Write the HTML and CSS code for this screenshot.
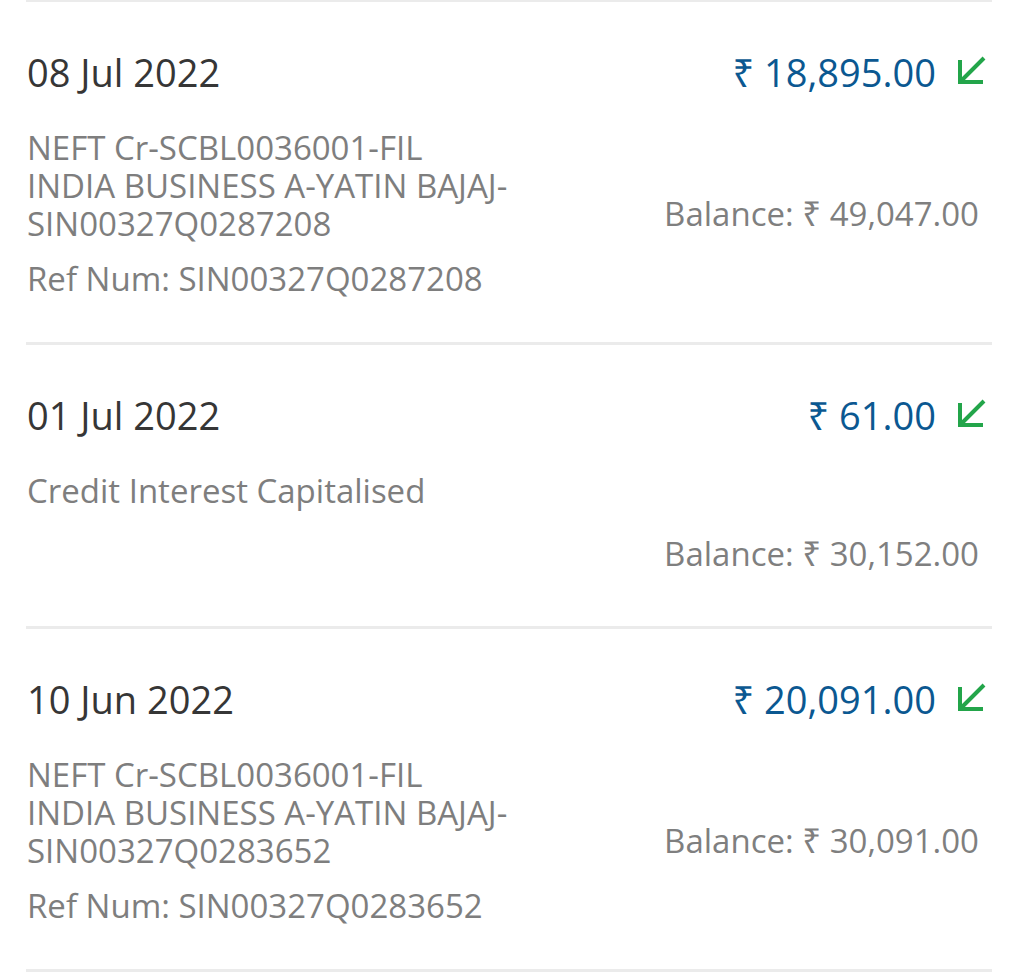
FILE: index.html
```html
<!DOCTYPE html>
<html lang="en">
<head>
<meta charset="utf-8">
<title>Transactions</title>
<link rel="stylesheet" href="styles.css">
</head>
<body>
<div class="list">
  <div class="txn">
    <div class="txn-top">
      <div class="date">08 Jul 2022</div>
      <div class="amount-wrap">
        <span class="amount">₹ 18,895.00</span>
        <svg class="arrow" viewBox="0 0 30 30" width="30" height="30"><path d="M3 4 V26 H26 M4 25 L27 2" fill="none" stroke="#23a54a" stroke-width="4" stroke-linejoin="miter"/></svg>
      </div>
    </div>
    <div class="txn-bottom">
      <div class="details">
        <div class="desc">NEFT Cr-SCBL0036001-FIL<br>INDIA BUSINESS A-YATIN BAJAJ-<br>SIN00327Q0287208</div>
        <div class="ref">Ref Num: SIN00327Q0287208</div>
      </div>
      <div class="balance">Balance: ₹ 49,047.00</div>
    </div>
  </div>
  <div class="txn txn--short">
    <div class="txn-top">
      <div class="date">01 Jul 2022</div>
      <div class="amount-wrap">
        <span class="amount">₹ 61.00</span>
        <svg class="arrow" viewBox="0 0 30 30" width="30" height="30"><path d="M3 4 V26 H26 M4 25 L27 2" fill="none" stroke="#23a54a" stroke-width="4" stroke-linejoin="miter"/></svg>
      </div>
    </div>
    <div class="txn-bottom">
      <div class="details">
        <div class="desc">Credit Interest Capitalised</div>
      </div>
      <div class="balance">Balance: ₹ 30,152.00</div>
    </div>
  </div>
  <div class="txn">
    <div class="txn-top">
      <div class="date">10 Jun 2022</div>
      <div class="amount-wrap">
        <span class="amount">₹ 20,091.00</span>
        <svg class="arrow" viewBox="0 0 30 30" width="30" height="30"><path d="M3 4 V26 H26 M4 25 L27 2" fill="none" stroke="#23a54a" stroke-width="4" stroke-linejoin="miter"/></svg>
      </div>
    </div>
    <div class="txn-bottom">
      <div class="details">
        <div class="desc">NEFT Cr-SCBL0036001-FIL<br>INDIA BUSINESS A-YATIN BAJAJ-<br>SIN00327Q0283652</div>
        <div class="ref">Ref Num: SIN00327Q0283652</div>
      </div>
      <div class="balance">Balance: ₹ 30,091.00</div>
    </div>
  </div>
</div>
</body>
</html>
```
FILE: styles.css
```css
html, body {
  margin: 0;
  padding: 0;
  background: #ffffff;
}

body {
  font-family: "Open Sans", "Noto Sans", sans-serif;
}

.list {
  margin-left: 26px;
  width: 966px;
  border-top: 2px solid #ebebeb;
}

.txn {
  border-bottom: 3px solid #ebebeb;
  padding: 44px 5px 44px 1px;
}

.txn-top {
  display: flex;
  justify-content: space-between;
  align-items: center;
  height: 52px;
}

.date {
  font-size: 38px;
  line-height: 52px;
  color: #363636;
}

.amount-wrap {
  display: flex;
  align-items: center;
  gap: 21px;
}

.amount {
  font-size: 38px;
  line-height: 52px;
  color: #0b5891;
}

.arrow {
  display: block;
  margin-top: -3px;
}

.txn-bottom {
  display: flex;
  justify-content: space-between;
  align-items: center;
  margin-top: 31px;
}

.details {
  display: flex;
  flex-direction: column;
  gap: 17px;
}

.desc, .ref {
  font-size: 33px;
  line-height: 38px;
  color: #7e7e7e;
}

.balance {
  font-size: 33px;
  line-height: 38px;
  color: #7f7f7f;
  margin-right: 8px;
}

.txn--short .txn-bottom {
  align-items: flex-start;
}

.txn--short .balance {
  margin-top: 63px;
  margin-bottom: 9px;
}
```
